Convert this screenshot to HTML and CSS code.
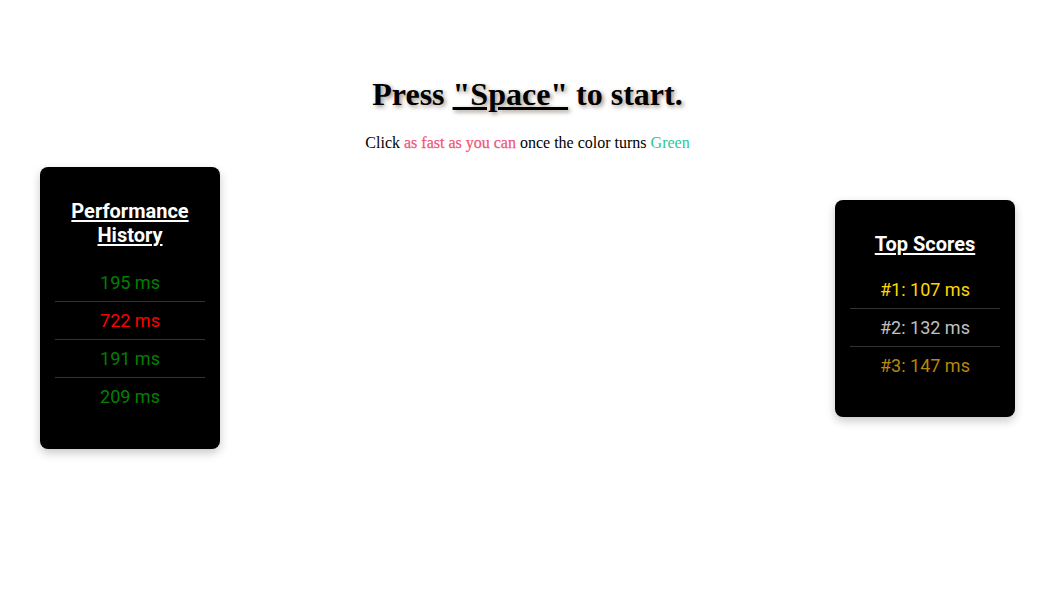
FILE: index.html
```html
<!DOCTYPE html>
<html lang="en">
<head>
<meta charset="utf-8">
<title>Reaction Time</title>
<link rel="stylesheet" href="styles.css">
</head>
<body>
<main class="stage">
  <header class="intro">
    <h1 class="intro-title">Press <span class="key">"Space"</span> to start.</h1>
    <p class="intro-text">Click <span class="hl-pink">as fast as you can</span> once the color turns <span class="hl-green">Green</span></p>
  </header>
  <section class="panel panel-left">
    <h2 class="panel-title">Performance History</h2>
    <ul class="panel-list">
      <li class="panel-item good">195 ms</li>
      <li class="panel-item bad">722 ms</li>
      <li class="panel-item good">191 ms</li>
      <li class="panel-item good">209 ms</li>
    </ul>
  </section>
  <section class="panel panel-right">
    <h2 class="panel-title">Top Scores</h2>
    <ul class="panel-list">
      <li class="panel-item gold">#1: 107 ms</li>
      <li class="panel-item silver">#2: 132 ms</li>
      <li class="panel-item bronze">#3: 147 ms</li>
    </ul>
  </section>
</main>
</body>
</html>
```
FILE: styles.css
```css
html, body {
  margin: 0;
  padding: 0;
  background: #fff;
}

body {
  font-family: "Liberation Serif", "Times New Roman", serif;
  color: #000;
}

.stage {
  box-sizing: border-box;
  height: 616px;
  padding: 0 41px 0 40px;
  display: grid;
  grid-template-columns: 180px 1fr 180px;
  grid-template-rows: 1fr;
}

.intro {
  grid-row: 1;
  grid-column: 1 / -1;
  align-self: start;
  padding-top: 76px;
  text-align: center;
}

.intro-title {
  margin: 0 0 21px;
  font-size: 32px;
  font-weight: bold;
  line-height: normal;
  text-shadow: 2px 2px 4px rgba(90, 70, 50, 0.6);
}

.key {
  text-decoration: underline;
}

.intro-text {
  margin: 0;
  font-size: 16px;
  line-height: normal;
}

.hl-pink {
  color: #ef5679;
  -webkit-text-stroke: 0.25px #ef5679;
}

.hl-green {
  color: #2bc79a;
}

.panel {
  grid-row: 1;
  align-self: center;
  position: relative;
  z-index: 1;
  box-sizing: border-box;
  width: 180px;
  background: #000;
  color: #fff;
  border-radius: 8px;
  box-shadow: 0 4px 10px rgba(0, 0, 0, 0.22);
  padding: 32px 15px 33px;
  font-family: Roboto, "Liberation Sans", sans-serif;
  text-align: center;
}

.panel-left {
  grid-column: 1;
  padding-top: 32px;
  padding-bottom: 34px;
}

.panel-right {
  grid-column: 3;
}

.panel-title {
  margin: 0 0 15px;
  font-size: 20px;
  line-height: 24px;
  font-weight: 700;
  text-decoration: underline;
  text-underline-offset: 2px;
}

.panel-left .panel-title {
  margin-bottom: 17px;
}

.panel-list {
  list-style: none;
  margin: 0;
  padding: 0;
}

.panel-item {
  padding: 8px 0;
  font-size: 18px;
  line-height: 21px;
  border-bottom: 1px solid #333;
}

.panel-item:last-child {
  border-bottom: none;
}

.good { color: #008000; }
.bad { color: #ff0000; }
.gold { color: #ffd700; }
.silver { color: #c0c0c0; }
.bronze { color: #b8860b; }
```
